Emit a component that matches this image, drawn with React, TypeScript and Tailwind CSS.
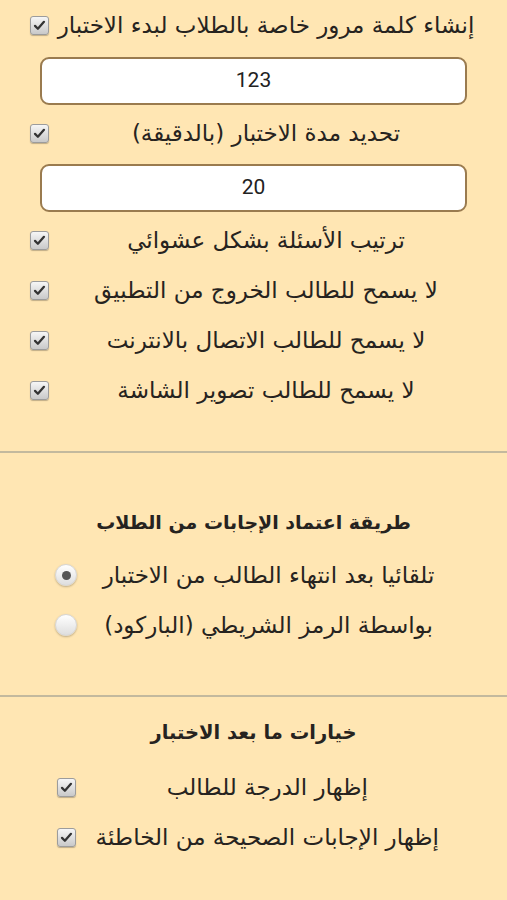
import React from "react";

const arabic = "font-['DejaVu_Sans','Noto_Sans',sans-serif]";

const Check = () => (
  <span className="flex h-[19px] w-[19px] items-center justify-center rounded-[3px] border border-[#9c9c9c] bg-gradient-to-b from-[#f6f6f6] to-[#c9c9c9] shadow-[0_1px_1px_rgba(0,0,0,0.25)]">
    <svg viewBox="0 0 16 16" className="h-[13px] w-[13px]">
      <path
        d="M2.5 8.5 L6 12 L13.5 3.5"
        fill="none"
        stroke="#333"
        strokeWidth="2.8"
        strokeLinecap="round"
        strokeLinejoin="round"
      />
    </svg>
  </span>
);

const Radio = ({ on }: { on?: boolean }) => (
  <span className="flex h-[22px] w-[22px] items-center justify-center rounded-full border border-[#d6d6d6] bg-gradient-to-b from-[#ffffff] to-[#dedede] shadow-[0_1px_2px_rgba(0,0,0,0.25)]">
    {on && <span className="h-[9px] w-[9px] rounded-full bg-[#555]" />}
  </span>
);

const Row = ({ label, control }: { label: string; control: React.ReactNode }) => (
  <>
    <div className="flex h-[50px] items-center justify-center whitespace-nowrap text-center">{label}</div>
    <div className="flex h-[50px] items-center">{control}</div>
  </>
);

const Field = ({ value }: { value: string }) => (
  <div className="mx-[40px] flex h-[48px] items-center justify-center rounded-[9px] border-2 border-[#9a7b4f] bg-white font-['Roboto',sans-serif] text-[21px] text-[#222]">
    {value}
  </div>
);

const Divider = () => <div className="h-[2px] w-full bg-[#c3b99e]" />;

export default function App() {
  return (
    <div dir="rtl" className={`h-[900px] w-full overflow-hidden bg-[#ffe6b3] text-[#262320] ${arabic} text-[23px]`}>
      <div className="flex justify-center">
        <div className="grid w-[447px] grid-cols-[1fr_auto] gap-x-[6px]">
          <Row label="إنشاء كلمة مرور خاصة بالطلاب لبدء الاختبار" control={<Check />} />
        </div>
      </div>
      <div className="mt-[7px]">
        <Field value="123" />
      </div>
      <div className="mt-[3px] flex justify-center">
        <div className="grid w-[447px] grid-cols-[1fr_auto] gap-x-[6px]">
          <Row label="تحديد مدة الاختبار (بالدقيقة)" control={<Check />} />
        </div>
      </div>
      <div className="mt-[6px]">
        <Field value="20" />
      </div>
      <div className="mt-[3px] flex justify-center">
        <div className="grid w-[447px] grid-cols-[1fr_auto] gap-x-[6px]">
          <Row label="ترتيب الأسئلة بشكل عشوائي" control={<Check />} />
          <Row label="لا يسمح للطالب الخروج من التطبيق" control={<Check />} />
          <Row label="لا يسمح للطالب الاتصال بالانترنت" control={<Check />} />
          <Row label="لا يسمح للطالب تصوير الشاشة" control={<Check />} />
        </div>
      </div>
      <div className="mt-[36px]">
        <Divider />
      </div>
      <div className="mt-[49px] flex h-[40px] items-center justify-center text-[19px] font-bold">
        طريقة اعتماد الإجابات من الطلاب
      </div>
      <div className="mt-[8px] flex justify-center pr-[4px]">
        <div className="grid w-[393px] grid-cols-[1fr_auto] gap-x-[12px]">
          <Row label="تلقائيا بعد انتهاء الطالب من الاختبار" control={<Radio on />} />
          <Row label="بواسطة الرمز الشريطي (الباركود)" control={<Radio />} />
        </div>
      </div>
      <div className="mt-[45px]">
        <Divider />
      </div>
      <div className="mt-[16px] flex h-[40px] items-center justify-center text-[19.5px] font-bold">
        خيارات ما بعد الاختبار
      </div>
      <div className="mt-[9px] flex justify-center pr-[11px]">
        <div className="grid w-[382px] grid-cols-[1fr_auto] gap-x-[20px]">
          <Row label="إظهار الدرجة للطالب" control={<Check />} />
          <Row label="إظهار الإجابات الصحيحة من الخاطئة" control={<Check />} />
        </div>
      </div>
    </div>
  );
}
